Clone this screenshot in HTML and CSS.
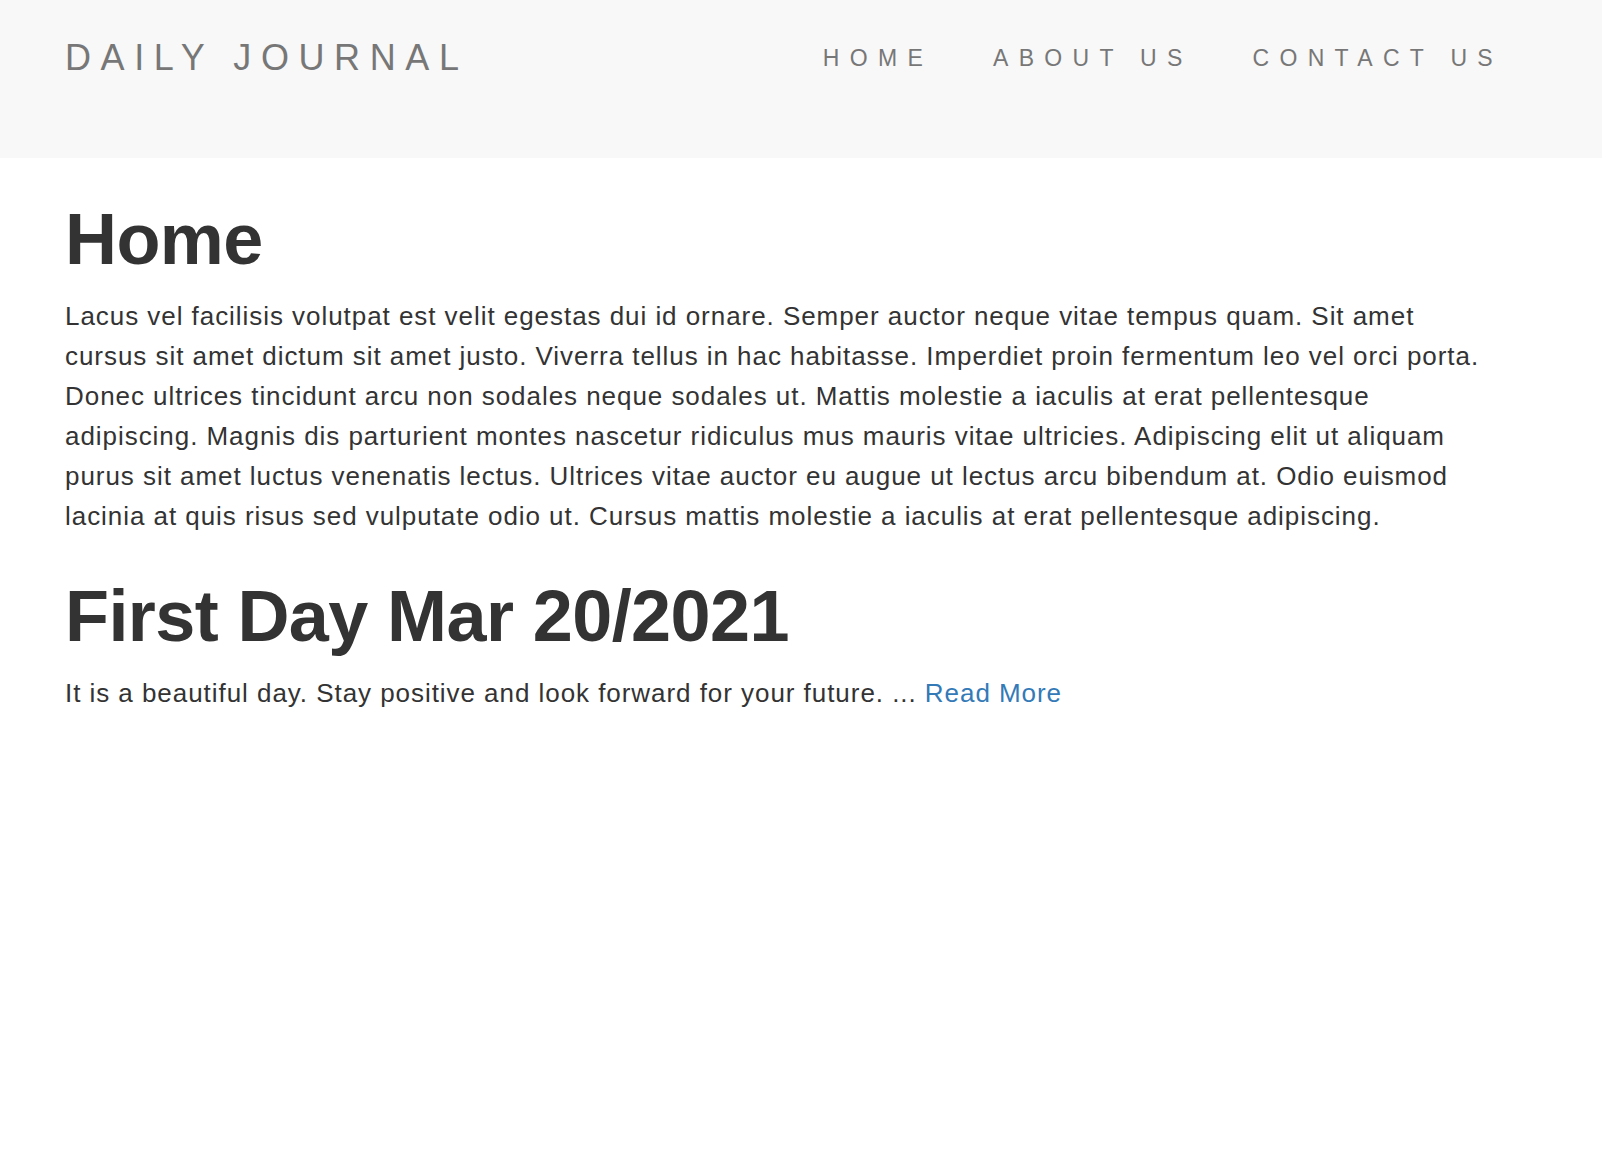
FILE: index.html
```html
<!DOCTYPE html>
<html lang="en">
<head>
<meta charset="utf-8">
<title>Daily Journal</title>
<link rel="stylesheet" href="styles.css">
</head>
<body>
<header class="navbar">
  <a class="brand" href="#">DAILY JOURNAL</a>
  <nav class="nav">
    <a class="nav-link" href="#">HOME</a>
    <a class="nav-link" href="#">ABOUT US</a>
    <a class="nav-link" href="#">CONTACT US</a>
  </nav>
</header>
<main class="content">
  <h1 class="title">Home</h1>
  <p class="text">Lacus vel facilisis volutpat est velit egestas dui id ornare. Semper auctor neque vitae tempus quam. Sit amet cursus sit amet dictum sit amet justo. Viverra tellus in hac habitasse. Imperdiet proin fermentum leo vel orci porta. Donec ultrices tincidunt arcu non sodales neque sodales ut. Mattis molestie a iaculis at erat pellentesque adipiscing. Magnis dis parturient montes nascetur ridiculus mus mauris vitae ultricies. Adipiscing elit ut aliquam purus sit amet luctus venenatis lectus. Ultrices vitae auctor eu augue ut lectus arcu bibendum at. Odio euismod lacinia at quis risus sed vulputate odio ut. Cursus mattis molestie a iaculis at erat pellentesque adipiscing.</p>
  <h1 class="title">First Day Mar 20/2021</h1>
  <p class="text">It is a beautiful day. Stay positive and look forward for your future. ... <a class="more" href="#">Read More</a></p>
</main>
</body>
</html>
```

FILE: styles.css
```css
* { box-sizing: border-box; }

html, body {
  margin: 0;
  padding: 0;
  background: #ffffff;
}

body {
  font-family: "Liberation Sans", Arial, Helvetica, sans-serif;
  color: #333333;
}

a { text-decoration: none; }

.navbar {
  display: flex;
  justify-content: space-between;
  align-items: flex-start;
  background: #f8f8f8;
  height: 158px;
  padding: 38px 69px 0 65px;
}

.brand {
  font-size: 36px;
  line-height: 40px;
  letter-spacing: 9.6px;
  color: #777777;
}

.nav {
  display: flex;
  margin-top: 5px;
}

.nav-link {
  font-size: 23px;
  line-height: 30px;
  letter-spacing: 10.3px;
  color: #777777;
  padding: 0 30px;
}

.content {
  padding: 42px 65px 0 65px;
}

.title {
  margin: 0 0 17px 0;
  font-size: 72px;
  line-height: 79px;
  font-weight: 700;
  letter-spacing: -0.6px;
  color: #333333;
}

.text {
  margin: 0 0 41px 0;
  max-width: 1428px;
  font-size: 26px;
  line-height: 40px;
  letter-spacing: 0.95px;
}

.more {
  color: #337ab7;
}
```
